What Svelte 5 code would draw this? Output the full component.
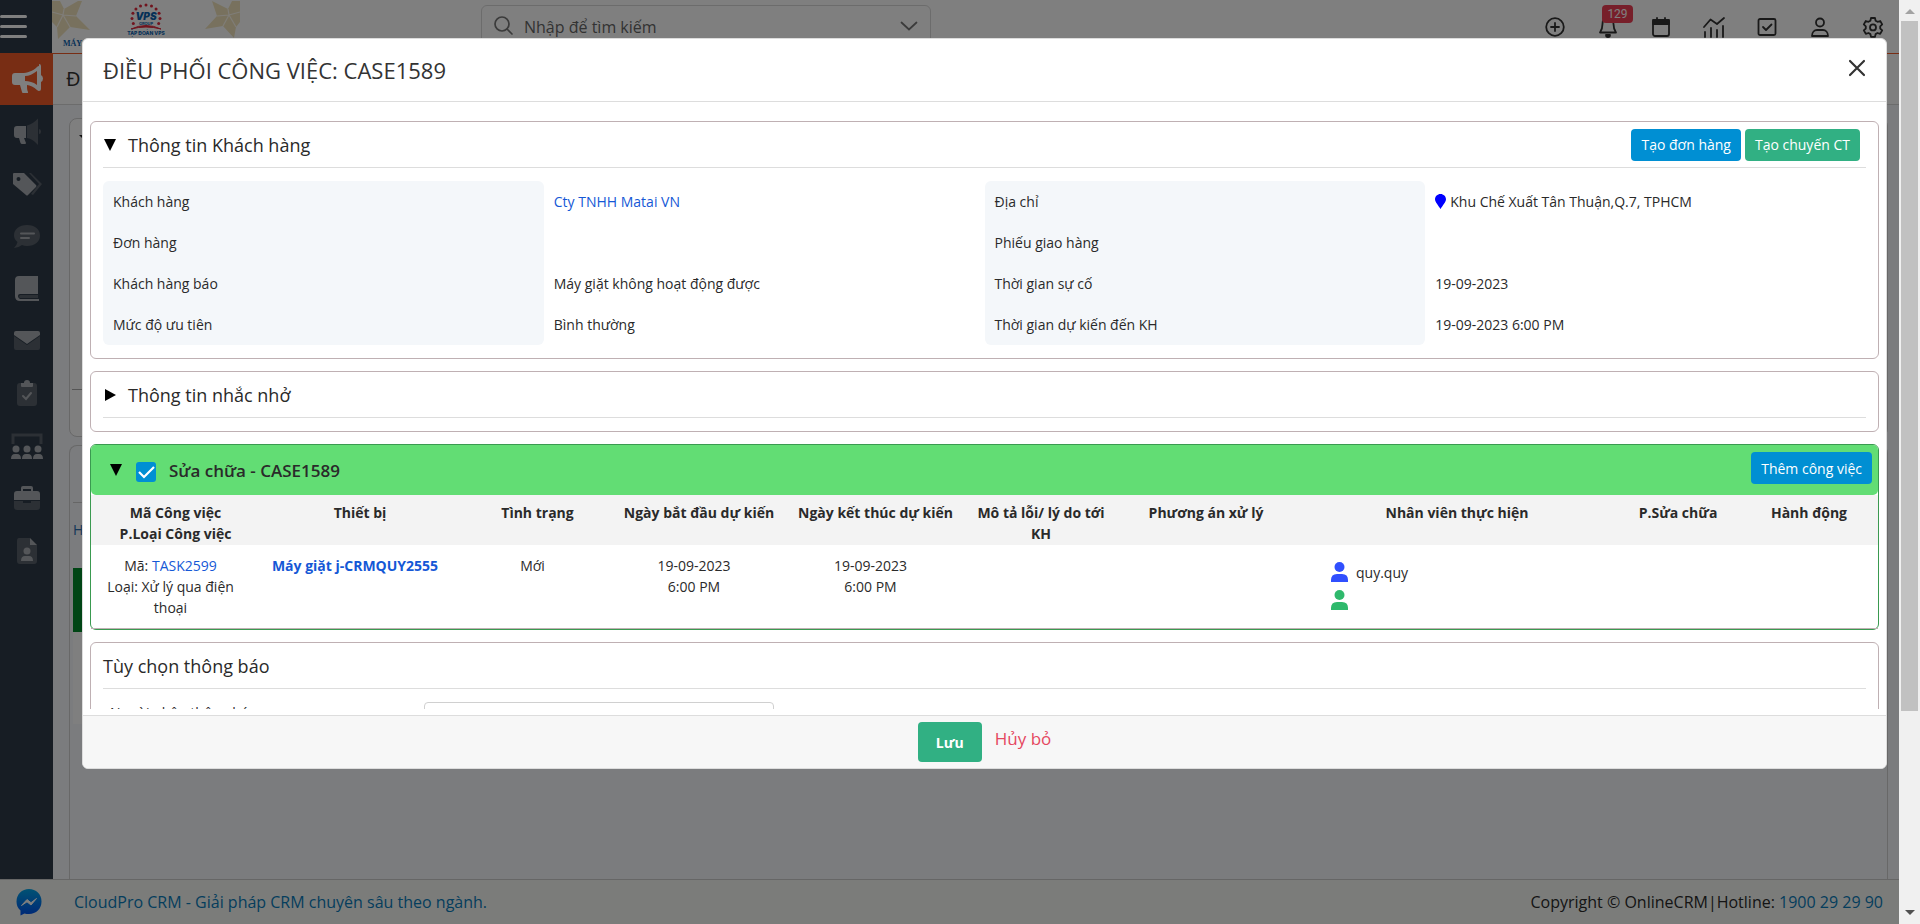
<script>
  const fields = [
    ['Khách hàng', 'Cty TNHH Matai VN', 'link'],
    ['Địa chỉ', 'Khu Chế Xuất Tân Thuận,Q.7, TPHCM', 'pin'],
    ['Đơn hàng', ''],
    ['Phiếu giao hàng', ''],
    ['Khách hàng báo', 'Máy giặt không hoạt động được'],
    ['Thời gian sự cố', '19-09-2023'],
    ['Mức độ ưu tiên', 'Bình thường'],
    ['Thời gian dự kiến đến KH', '19-09-2023 6:00 PM']
  ];

  const columns = [
    ['Mã Công việc\nP.Loại Công việc', 169],
    ['Thiết bị', 200],
    ['Tình trạng', 155],
    ['Ngày bắt đầu dự kiến', 168],
    ['Ngày kết thúc dự kiến', 185],
    ['Mô tả lỗi/ lý do tới KH', 146],
    ['Phương án xử lý', 184],
    ['Nhân viên thực hiện', 318],
    ['P.Sửa chữa', 124],
    ['Hành động', 138]
  ];
  const total = columns.reduce((sum, c) => sum + c[1], 0);

  const dots = Array.from({ length: 11 }, (_, i) => {
    const a = Math.PI * (0.86 + (i * 1.28) / 10);
    return [94 + 14 * Math.cos(a), 18 + 13 * Math.sin(a)];
  });

  let checked = $state(true);
</script>

<div class="window">
  <div class="page">
    <header class="topbar">
      <button class="burger" aria-label="Menu"><span></span><span></span><span></span></button>
      <svg class="logo" viewBox="0 0 188 50" aria-label="VPS Group">
        <rect width="188" height="50" fill="#fff" />
        <g fill="#f0e3bd">
          <path d="M0 1H8L12 9L26 1H30L24 16L38 30L18 27L6 39L5 27L0 22Z" />
          <path d="M188 1H180L176 9L160 1L165 16L153 29L171 26L182 38L184 27L188 22Z" />
        </g>
        <g stroke="#fffaf0" stroke-width="1.200" fill="none">
          <path d="M12 9L11 15L24 16M11 15L18 27M11 15L5 27M11 15L0 12" />
          <path d="M176 9L177 15L165 16M177 15L171 26M177 15L184 27M177 15L188 12" />
        </g>
        {#each dots as [x, y]}
          <circle cx={x} cy={y} r="1.5" fill="#e0283c" />
        {/each}
        <text x="94" y="20" text-anchor="middle" class="vps">VPS</text>
        <text x="94" y="25" text-anchor="middle" class="grp">GROUP</text>
        <path d="M79 29Q94 22 109 29Q94 25 79 29Z" fill="#e0283c" stroke="#e0283c" />
        <text x="94" y="35" text-anchor="middle" class="tap">TẬP ĐOÀN VPS</text>
        <text x="11" y="46" class="may">MÁY</text>
      </svg>
      <div class="search">
        <svg width="20" height="20" viewBox="0 0 20 20" fill="none" stroke="#777" stroke-width="1.7" stroke-linecap="round"><circle cx="8" cy="8" r="7" /><path d="M13 13l5 5" /></svg>
        <input aria-label="Tìm kiếm" placeholder="Nhập để tìm kiếm" />
        <svg width="18" height="10" viewBox="0 0 18 10" fill="none" stroke="#777" stroke-width="1.8" stroke-linecap="round"><path d="M1.500 1.500L9 8.500L16.500 1.500" /></svg>
      </div>
      <nav class="tools" aria-label="Công cụ">
        <button aria-label="Thêm"><svg viewBox="0 0 24 24"><circle cx="12" cy="12" r="8.800" /><path d="M12 8v8M8 12h8" /></svg></button>
        <button aria-label="Thông báo" class="bell"><svg viewBox="0 0 24 24"><path d="M12 3c-4 0-5.500 3-5.500 6 0 5-1.500 7-2.500 8.500h16C19 16 17.500 14 17.500 9c0-3-1.500-6-5.500-6z" /><path class="fill" d="M10 20h4a2 2 0 0 1-4 0z" /></svg><span class="badge">129</span></button>
        <button aria-label="Lịch"><svg viewBox="0 0 24 24"><rect x="4" y="5" width="16" height="16" rx="2" /><path class="fill" d="M4 5h16v4H4z" /><path d="M8 3v3M16 3v3" /></svg></button>
        <button aria-label="Báo cáo"><svg viewBox="0 0 24 24"><path d="M2 12L8.500 4.500L15 9L22 3M3 17v5M9 13v9M15 15v7M21 11v11" /></svg></button>
        <button aria-label="Công việc"><svg viewBox="0 0 24 24"><rect x="3.500" y="4" width="17" height="16" rx="1.500" /><path d="M8 12l3 3 5.500-5.500" /></svg></button>
        <button aria-label="Tài khoản"><svg viewBox="0 0 24 24"><circle cx="12" cy="7.500" r="4" /><path d="M4 21c0-4 2.500-6 5-6h6c2.500 0 5 2 5 6z" /></svg></button>
        <button aria-label="Cài đặt"><svg viewBox="0 0 24 24"><path d="M10 3h4l.6 2.700 1.900 1.100 2.700-.8 2 3.400-2 1.900v2.200l2 1.900-2 3.400-2.700-.8-1.900 1.100L14 21.800h-4l-.6-2.700-1.900-1.100-2.700.8-2-3.400 2-1.900v-2.200l-2-1.900 2-3.400 2.700.8 1.900-1.100z" /><circle cx="12" cy="12.400" r="3" /></svg></button>
      </nav>
    </header>

    <div class="middle">
      <aside>
        <a href="#top" class="active" aria-label="Chiến dịch">
          <svg width="32" height="32" viewBox="0 0 32 32"><path fill="#fff" fill-rule="evenodd" d="M28 1q2 0 2 2v9q2 1 2 3.500T30 19v7q0 2-2 2-1 0-2-1c-3-3-7-4.500-10-5 0 3 0 5 1 7 0 1 0 1-1 1h-4q-1 0-1-1l-2-7H4q-3 0-3-3v-6q0-3 3-3h7c5 0 11-2 15-6q1-1 2-1zM14 13v5c4 0 8 1 12 4V8c-4 3-8 5-12 5z" /></svg>
        </a>
        <nav class="side" aria-label="Chức năng">
          <a href="#1" aria-label="Tiếp thị"><svg viewBox="0 0 30 30"><path class="a" d="M14 10v12h-2l2 5q0 1-1 1h-3q-1 0-1.500-1L7 22H5q-3 0-3-3v-6q0-3 3-3z" /><path class="b" d="M15 9.500Q21 8 26 2.500V29q-5-6-11-7zM27 13q2 0 2 2.500T27 18z" /></svg></a>
          <a href="#2" aria-label="Bán hàng"><svg viewBox="0 0 30 30"><path class="b" d="M17 4h2l11 11-9 11-2-1 8-10z" /><path class="a" fill-rule="evenodd" d="M1 5q0-1 1-1h10l12 12q1 1 0 2l-8 8q-1 1-2 0L1 15zM6.500 8a2 2 0 1 0 0 4 2 2 0 0 0 0-4z" /></svg></a>
          <a href="#3" aria-label="Trao đổi"><svg viewBox="0 0 30 30"><path class="b" d="M15 4c8 0 13 4.500 13 10.500S23 25 15 25q-3 0-5-1-4 3-8 3 3-3 3.500-6Q2 18 2 14.500C2 8.500 7 4 15 4z" /><path class="s" d="M9 12.500h13M9 17h8" /></svg></a>
          <a href="#4" aria-label="Tài liệu"><svg viewBox="0 0 30 30"><path class="a" d="M7 2h19v18H8q-2 0-2 2t2 3h19v2H8q-5 0-5-5V6q0-4 4-4z" /><path class="b" d="M8 21h18v3H8q-2-1 0-3z" /></svg></a>
          <a href="#5" aria-label="Email"><svg viewBox="0 0 30 30"><path class="b" d="M2 10l13 9 13-9v12q0 2-2 2H4q-2 0-2-2z" /><path class="a" d="M4 5h22q2 0 2 2v2l-13 9L2 9V7q0-2 2-2z" /></svg></a>
          <a href="#6" aria-label="Nhiệm vụ"><svg viewBox="0 0 30 30"><path class="b" d="M8 5h14q3 0 3 3v17q0 3-3 3H8q-3 0-3-3V8q0-3 3-3z" /><path class="a" d="M9 5h3q0-3 3-3t3 3h3v3q0 1-1 1H10q-1 0-1-1z" /><path class="s" d="M11 18l3 3 5-6" /></svg></a>
          <a href="#7" aria-label="Nhóm"><svg class="wide" viewBox="0 0 34 30"><path d="M3 13V4h28v9" fill="none" stroke="#59606a" stroke-width="3" /><g class="a"><circle cx="6" cy="18" r="3.500" /><circle cx="17" cy="18" r="3.500" /><circle cx="28" cy="18" r="3.500" /><path d="M1 28q0-5 4-5h2q4 0 4 5zM12 28q0-5 4-5h2q4 0 4 5zM23 28q0-5 4-5h2q4 0 4 5z" /></g></svg></a>
          <a href="#8" aria-label="Dự án"><svg viewBox="0 0 30 30"><path class="a" fill-rule="evenodd" d="M11 3h8q2 0 2 2v3h4q3 0 3 3v6H2v-6q0-3 3-3h4V5q0-2 2-2zm0 3v2h8V6z" /><path class="b" d="M2 18h9v2h8v-2h9v6q0 3-3 3H5q-3 0-3-3z" /></svg></a>
          <a href="#9" aria-label="Hồ sơ"><svg viewBox="0 0 30 30"><path class="b" d="M7 2h11v7h7v16q0 3-3 3H8q-3 0-3-3V5q0-3 2-3z" /><path class="a" d="M18 2l7 7h-7z" /><g class="a"><circle cx="15" cy="15" r="3.500" /><path d="M9 25q0-5 4-5h4q4 0 4 5z" /></g></svg></a>
        </nav>
      </aside>

      <main>
        <div class="crumb"><span>ĐI</span></div>
        <div class="content">
          <div class="card first"><i class="caret"></i><div class="strip"></div></div>
          <div class="card second"><div class="bar"></div><a href="#h">H</a><div class="grid"></div></div>
        </div>
      </main>
    </div>

    <footer class="foot">
      <svg width="26" height="28" viewBox="0 0 26 28"><defs><linearGradient id="ms" x1="0" y1="0" x2="0" y2="1"><stop offset="0" stop-color="#00a5e8" /><stop offset="1" stop-color="#0050ee" /></linearGradient></defs><path fill="url(#ms)" d="M13 1C6 1 .5 6 .5 13.500c0 4 1.500 7 4 9V27.500l4-2q2 .5 4.500.5c7 0 12.500-5 12.500-12.500S20 1 13 1z" /><path d="M5.500 17.500l5.500-6 4 3.200 5.500-4.200-5.500 6.500-4-3.200z" fill="#fff" stroke="#fff" stroke-linejoin="round" /></svg>
      <a href="#crm">CloudPro CRM - Giải pháp CRM chuyên sâu theo ngành.</a>
      <p>Copyright © OnlineCRM|Hotline: <a href="#tel">1900 29 29 90</a></p>
    </footer>

    <div class="overlay">
      <div class="modal" role="dialog" aria-labelledby="dlg">
        <div class="modal-head">
          <h1 id="dlg">ĐIỀU PHỐI CÔNG VIỆC: CASE1589</h1>
          <button aria-label="Đóng"><svg width="18" height="18" viewBox="0 0 18 18" stroke="#333" stroke-width="2.200" stroke-linecap="round"><path d="M2 2l14 14M16 2L2 16" /></svg></button>
        </div>

        <div class="modal-body">
          <div class="scroller">
            <section class="panel">
              <div class="panel-head">
                <svg class="tri" viewBox="0 0 12 12"><path d="M0 0h12L6 12z" /></svg>
                <h2>Thông tin Khách hàng</h2>
                <div class="actions">
                  <button class="btn blue">Tạo đơn hàng</button>
                  <button class="btn green">Tạo chuyến CT</button>
                </div>
              </div>
              <dl>
                {#each fields as [label, value, kind]}
                  <dt>{label}</dt>
                  <dd>
                    {#if kind === 'link'}<a href="#kh">{value}</a>
                    {:else if kind === 'pin'}<svg width="11" height="15" viewBox="0 0 11 15"><path fill="#00f" d="M5.500 0C2.500 0 0 2.300 0 5.300 0 8 3 11 5.500 15 8 11 11 8 11 5.300 11 2.300 8.500 0 5.500 0z" /></svg> {value}
                    {:else}{value}{/if}
                  </dd>
                {/each}
              </dl>
            </section>

            <section class="panel">
              <div class="panel-head">
                <svg class="tri" viewBox="0 0 12 12"><path d="M1 0v12l11-6z" /></svg>
                <h2>Thông tin nhắc nhở</h2>
              </div>
            </section>

            <section class="panel task">
              <div class="task-head">
                <svg class="tri" viewBox="0 0 12 12"><path d="M0 0h12L6 12z" /></svg>
                <input id="case" type="checkbox" bind:checked />
                <label for="case">Sửa chữa - CASE1589</label>
                <button class="btn blue">Thêm công việc</button>
              </div>
              <table>
                <colgroup>
                  {#each columns as [name, w]}<col style="width: {(w / total) * 100}%" />{/each}
                </colgroup>
                <thead>
                  <tr>{#each columns as [name]}<th>{name}</th>{/each}</tr>
                </thead>
                <tbody>
                  <tr>
                    <td>Mã: <a href="#task">TASK2599</a><br />Loại: Xử lý qua điện thoại</td>
                    <td><a class="strong" href="#dev">Máy giặt j-CRMQUY2555</a></td>
                    <td>Mới</td>
                    <td>19-09-2023<br />6:00 PM</td>
                    <td>19-09-2023<br />6:00 PM</td>
                    <td></td>
                    <td></td>
                    <td class="staff">
                      <p><svg width="17" height="20" viewBox="0 0 17 20" fill="#304ffe"><ellipse cx="8.500" cy="5" rx="5" ry="5" /><path d="M0 20v-2q0-6 6-6h5q6 0 6 6v2z" /></svg>quy.quy</p>
                      <p><svg width="17" height="20" viewBox="0 0 17 20" fill="#2fb96c"><ellipse cx="8.500" cy="5" rx="5" ry="5" /><path d="M0 20v-2q0-6 6-6h5q6 0 6 6v2z" /></svg></p>
                    </td>
                    <td></td>
                    <td></td>
                  </tr>
                </tbody>
              </table>
            </section>

            <section class="panel">
              <div class="panel-head"><h2>Tùy chọn thông báo</h2></div>
              <div class="notify">
                <label for="receiver">Người nhận thông báo</label>
                <input id="receiver" />
              </div>
            </section>
          </div>
        </div>

        <div class="modal-foot">
          <button class="save">Lưu</button>
          <a href="#cancel">Hủy bỏ</a>
        </div>
      </div>
    </div>
  </div>

  <div class="scrollbar">
    <svg width="10" height="5" viewBox="0 0 10 5"><path fill="#a3a3a3" d="M5 0l5 5H0z" /></svg>
    <div class="thumb"></div>
    <svg width="10" height="5" viewBox="0 0 10 5"><path fill="#505050" d="M0 0h10L5 5z" /></svg>
  </div>
</div>

<style>
  * { box-sizing: border-box; }
  :global(body) { margin: 0; font-family: "Segoe UI", "Open Sans", "Noto Sans", sans-serif; font-size: 14px; line-height: 21px; color: #2a2a2a; }
  h1, h2, p, dl, dd { margin: 0; }
  a { color: #1558d6; text-decoration: none; }
  button { font: inherit; border: 0; padding: 0; background: none; cursor: pointer; }
  svg { display: block; flex: none; }

  .window { display: flex; height: 100vh; overflow: hidden; }
  .page { position: relative; flex: 1; min-width: 0; display: flex; flex-direction: column; background: #f6f8fc; }
  .scrollbar { width: 21px; background: #f0f0f0; display: flex; flex-direction: column; align-items: center; padding: 9px 0; }
  .thumb { width: 17px; height: calc(100vh - 234px); margin-top: 7px; background: #c1c1c1; }
  .scrollbar svg:last-child { margin-top: auto; }

  .topbar { height: 53px; display: flex; background: #fff; }
  .burger { width: 52px; background: #2e3b49; display: flex; flex-direction: column; gap: 7px; padding-top: 15px; }
  .burger span { width: 27px; height: 3px; border-radius: 2px; background: #fff; }
  .logo { width: 188px; height: 50px; }
  .vps { font: italic 900 10px Inter, sans-serif; fill: #0b62ae; }
  .grp { font: 700 4px Inter, sans-serif; fill: #0b62ae; }
  .tap { font: 800 5px Inter, sans-serif; fill: #0b62ae; }
  .may { font: 700 8px "Liberation Serif", serif; fill: #0b62ae; }
  .search { width: 450px; height: 40px; margin: 5px 0 0 241px; display: flex; align-items: flex-start; gap: 10px; padding: 10px 12px; border: 1px solid #d9d9d9; border-radius: 6px; }
  .search input { flex: 1; height: 22px; border: 0; padding: 0; font: inherit; font-size: 16px; background: none; }
  .search input::placeholder { color: #666; opacity: 1; }
  .search svg:last-child { margin-top: 5px; }
  .tools { margin: 15px 14px 0 auto; display: flex; align-items: flex-start; gap: 29px; }
  .tools svg { width: 24px; height: 24px; fill: none; stroke: #333; stroke-width: 1.8; stroke-linejoin: round; stroke-linecap: round; }
  .tools .fill { fill: #333; }
  .bell { position: relative; }
  .badge { position: absolute; left: 6px; top: -10px; width: 31px; height: 18px; border-radius: 4px; background: #ee3f54; color: #fff; font: 12px/18px Roboto, sans-serif; }

  .middle { flex: 1; display: flex; min-height: 0; }
  aside { width: 53px; background: #2e3b49; }
  .active { display: grid; place-items: center; height: 52px; background: #f15a29; }
  .side { height: 472px; display: flex; flex-direction: column; }
  .side a { flex: 1; display: grid; place-items: center; }
  .side svg { width: 30px; height: 30px; }
  .side .wide { width: 34px; }
  .a { fill: #a9adb2; }
  .b { fill: #59606a; }
  .s { fill: none; stroke: #a9adb2; stroke-width: 2; stroke-linecap: round; }

  main { flex: 1; display: flex; flex-direction: column; }
  .crumb { height: 52px; border-top: 1px solid #f15a29; border-bottom: 1px solid #d9d9d9; background: #fff; padding: 12px 13px; font-size: 20px; line-height: 26px; color: #333; }
  .content { flex: 1; display: flex; flex-direction: column; gap: 8px; padding: 13px 11px 0 16px; }
  .card { border: 1px solid #d0d0d0; border-radius: 8px; }
  .first { height: 319px; background: #fff; padding: 16px 0 0 9px; }
  .caret { display: block; border: 6px solid transparent; border-top-color: #222; width: 12px; }
  .strip { margin: 242px 0 0 -7px; border-top: 1px solid #aaa; }
  .second { flex: 1; border-bottom: 0; border-radius: 8px 8px 0 0; padding: 0 3px; }
  .bar { height: 57px; border-bottom: 1px solid #ccc; margin-bottom: 16px; }
  .second a { display: block; color: #2b6fb0; }
  .grid { margin-top: 28px; height: 156px; border-top: 64px solid #008a2b; background: #fff; }

  .foot { height: 45px; border-top: 1px solid #ccc; background: #f6f9f5; display: flex; align-items: center; padding: 0 16px; gap: 32px; font-size: 16px; }
  .foot a { color: #0a7cba; }
  .foot p { margin-left: auto; }

  .overlay { position: absolute; inset: 0; padding: 38px 12px 0 82px; background: rgb(0 0 0 / 50%); }
  .modal { border: 1px solid #ddd; border-radius: 6px; overflow: hidden; background: #fff; }
  .modal-head { display: flex; align-items: center; justify-content: space-between; height: 63px; padding: 0 20px; border-bottom: 1px solid #ddd; }
  .modal-head button { padding-bottom: 4px; }
  h1 { font-size: 22px; font-weight: 500; line-height: 30px; color: #333; }
  .modal-body { padding: 19px 7px 6px; }
  .scroller { height: calc(100vh - 336px); overflow: hidden; }
  .panel { border: 1px solid #bfb0b3; border-radius: 6px; padding: 0 12px 13px; margin-bottom: 12px; }
  .panel-head { display: flex; align-items: center; gap: 12px; height: 46px; border-bottom: 1px solid #ddd; }
  h2 { font-size: 18px; font-weight: 500; line-height: 24px; }
  .tri { width: 12px; height: 12px; margin-left: 1px; }
  .actions { margin-left: auto; padding-right: 6px; display: flex; gap: 4px; }
  .btn { height: 32px; padding: 0 10px; border-radius: 4px; color: #fff; white-space: nowrap; }
  .blue { background: #008fd3; }
  .green { background: #31b083; }
  dl { display: grid; grid-template-columns: repeat(4, 1fr); margin-top: 13px; }
  dt, dd { height: 41px; padding: 10px; }
  dt { background: #f4f7fa; }
  dt:nth-of-type(-n + 2) { border-radius: 6px 6px 0 0; }
  dt:nth-last-of-type(-n + 2) { border-radius: 0 0 6px 6px; }
  dd { display: flex; align-items: center; gap: 4px; }

  .task { border-color: #3a9a50; padding: 0; }
  .task-head { display: flex; align-items: center; height: 50px; padding: 0 6px 0 18px; background: #62dd74; border-radius: 5px; }
  .task-head label { margin-left: 13px; font-size: 17px; font-weight: 600; }
  .task-head .btn { margin: 0 0 4px auto; }
  .task-head input { appearance: none; width: 20px; height: 20px; margin: 3px 0 0 14px; border-radius: 3px; background: #fff; }
  .task-head input:checked { background: #008fd3 url("data:image/svg+xml,%3Csvg xmlns='http://www.w3.org/2000/svg' viewBox='0 0 20 20'%3E%3Cpath d='M3 10l5 5L18 5' fill='none' stroke='white' stroke-width='2.200'/%3E%3C/svg%3E"); }
  table { width: 100%; table-layout: fixed; border-collapse: collapse; text-align: center; border-bottom: 1px solid #bfb0b3; }
  th { padding: 7px 3px 1px; vertical-align: top; background: #f3f3f3; font-weight: 700; white-space: pre-line; }
  td { height: 83px; padding: 10px 16px 10px 6px; vertical-align: top; }
  .strong { font-weight: 700; white-space: nowrap; }
  .staff { padding: 17px 6px 0 33px; }
  .staff p { display: flex; align-items: center; gap: 8px; height: 28px; padding-bottom: 8px; }

  .notify { display: grid; grid-template-columns: 321px 350px; margin-top: 13px; }
  .notify label { padding: 0 7px; }
  .notify input { height: 32px; border: 1px solid #d0d0d0; border-radius: 4px; }

  .modal-foot { display: flex; justify-content: center; gap: 13px; height: 53px; padding-top: 6px; border-top: 1px solid #ddd; background: #f7f7f7; }
  .save { width: 64px; height: 40px; border-radius: 4px; background: #31b083; color: #fff; font-weight: 700; }
  .modal-foot a { font-size: 17px; line-height: 34px; color: #e5475f; }
</style>
